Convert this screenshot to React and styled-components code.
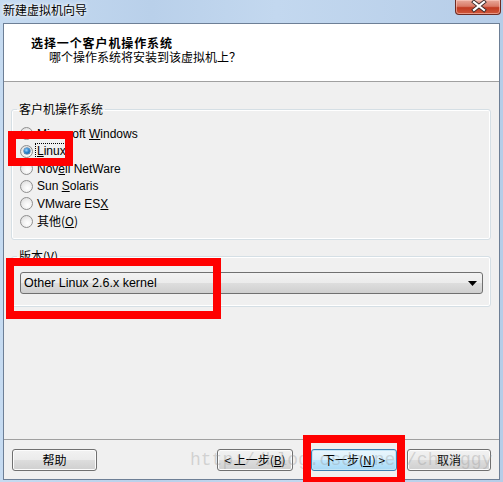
import styled, { createGlobalStyle } from "styled-components";

const GlobalStyle = createGlobalStyle`
  html, body {
    margin: 0;
    padding: 0;
  }
  body {
    width: 503px;
    height: 482px;
    overflow: hidden;
    background: #bcd3ec;
    font-family: "Liberation Sans", "Noto Sans CJK SC", sans-serif;
    font-size: 12px;
    color: #000;
  }
`;

const cjk = `"Noto Sans CJK SC", "Liberation Sans", sans-serif`;

const osList = [
  { label: "Microsoft ", key: "W", rest: "indows" },
  { label: "", key: "L", rest: "inux", checked: true },
  { label: "Nov", key: "e", rest: "ll NetWare" },
  { label: "Sun ", key: "S", rest: "olaris" },
  { label: "VMware ES", key: "X", rest: "" },
  { label: "其他(", key: "O", rest: ")" },
];

function App() {
  return (
    <>
      <GlobalStyle />
      <Window>
        <TitleBar>
          <Title>新建虚拟机向导</Title>
          <CloseButton>
            <svg width="46" height="15" viewBox="0 0 46 15">
              <path
                d="M18 3 L28 11 M28 3 L18 11"
                stroke="#3a2a2a"
                strokeWidth="4"
                strokeLinecap="square"
              />
              <path
                d="M18 3 L28 11 M28 3 L18 11"
                stroke="#fff"
                strokeWidth="2.2"
                strokeLinecap="square"
              />
            </svg>
          </CloseButton>
        </TitleBar>

        <Client>
          <Header>
            <HeaderTitle>选择一个客户机操作系统</HeaderTitle>
            <HeaderSub>哪个操作系统将安装到该虚拟机上？</HeaderSub>
          </Header>

          <Body>
            <Group $pb={9}>
              <Legend>客户机操作系统</Legend>
              {osList.map((os) => (
                <RadioRow key={os.key}>
                  <Radio $checked={os.checked} />
                  <RadioText $focus={os.checked} $cjk={os.label.includes("其")}>
                    {os.label}
                    <u>{os.key}</u>
                    {os.rest}
                  </RadioText>
                </RadioRow>
              ))}
            </Group>

            <Group $mt={9} $pb={12}>
              <Legend>
                版本(<u>V</u>)
              </Legend>
              <Combo>
                <span>Other Linux 2.6.x kernel</span>
                <svg width="9" height="5" viewBox="0 0 9 5">
                  <path d="M0 0 H9 L4.5 5 Z" fill="#000" />
                </svg>
              </Combo>
            </Group>
          </Body>

          <Footer>
            <Button $w={85}>帮助</Button>
            <Button $w={76} $auto>
              &lt; 上一步(<u>B</u>)
            </Button>
            <Button $w={86} $ml={18} $default>
              下一步(<u>N</u>) &gt;
            </Button>
            <Button $w={84} $ml={10}>
              取消
            </Button>
          </Footer>
        </Client>

        <Watermark>http://blog.csdn.net/chenggy</Watermark>
        <Mark style={{ left: 8, top: 131, width: 65, height: 35 }} />
        <Mark style={{ left: 6, top: 258, width: 215, height: 61 }} />
        <Mark style={{ left: 303, top: 435, width: 102, height: 50 }} />
      </Window>
    </>
  );
}

const Window = styled.div`
  position: relative;
  width: 503px;
  height: 482px;
  display: flex;
  flex-direction: column;
  background: linear-gradient(90deg, #c6dbf1 0%, #b9d0ea 30%, #c3d8ef 55%, #b6cde8 100%);
`;

const TitleBar = styled.div`
  height: 23px;
  flex: none;
  display: flex;
  justify-content: space-between;
  align-items: flex-start;
  padding-left: 3px;
`;

const Title = styled.div`
  padding-top: 3px;
  font-family: ${cjk};
  font-size: 12px;
  line-height: 14px;
  text-shadow: 0 0 5px #fff, 0 0 3px #fff;
`;

const CloseButton = styled.div`
  width: 46px;
  height: 15px;
  margin-right: 2px;
  box-sizing: border-box;
  border: 1px solid #6e2b22;
  border-top: none;
  border-radius: 0 0 4px 4px;
  background: linear-gradient(#e9a99b 0%, #d97a67 45%, #c13b22 55%, #d0583b 100%);
  box-shadow: inset 0 0 0 1px rgba(255, 210, 200, 0.55);
  svg {
    display: block;
    margin-top: -1px;
  }
`;

const Client = styled.div`
  flex: 1;
  margin: 0 3px 2px;
  border: 1px solid #6d7f96;
  background: #f0f0f0;
  display: flex;
  flex-direction: column;
`;

const Header = styled.div`
  height: 58px;
  box-sizing: border-box;
  flex: none;
  background: #fff;
  border-bottom: 1px solid #a0a0a0;
  padding: 12px 0 0 27px;
  font-family: ${cjk};
  font-size: 12px;
  line-height: 14px;
`;

const HeaderTitle = styled.div`
  font-weight: bold;
  letter-spacing: 0.9px;
`;

const HeaderSub = styled.div`
  padding-left: 18px;
`;

const Body = styled.div`
  flex: 1;
  padding: 20px 8px 0 7px;
`;

const Group = styled.fieldset`
  margin: ${(p) => p.$mt || 0}px 0 0;
  padding: 9px 7px ${(p) => p.$pb}px 8px;
  border: 1px solid #d5dfe5;
  border-radius: 3px;
  box-shadow: inset 0 0 0 1px #fff;
`;

const Legend = styled.legend`
  margin-left: -3px;
  padding: 0 2px;
  font-family: ${cjk};
  font-size: 12px;
  line-height: 14px;
`;

const RadioRow = styled.div`
  height: 17.5px;
  display: flex;
  align-items: center;
  gap: 2px;
`;

const Radio = styled.span`
  position: relative;
  width: 13px;
  height: 13px;
  box-sizing: border-box;
  border-radius: 50%;
  border: 1px solid #8f8f8f;
  background: radial-gradient(circle at 60% 65%, #ffffff 0%, #f2f2f2 40%, #d6d6d6 100%);
  flex: none;

  &::after {
    content: "";
    display: ${(p) => (p.$checked ? "block" : "none")};
    position: absolute;
    left: 2.5px;
    top: 2.5px;
    width: 6px;
    height: 6px;
    border-radius: 50%;
    background: radial-gradient(circle at 40% 35%, #9fd4ff 0%, #2b86cf 45%, #0c4f8c 100%);
    box-shadow: 0 0 0 0.5px #1b5a93;
  }
`;

const RadioText = styled.span`
  font-family: ${(p) => (p.$cjk ? cjk : `"Liberation Sans", sans-serif`)};
  font-size: 12px;
  line-height: 14px;
  padding: 0 1px;
  border: 1px dotted ${(p) => (p.$focus ? "#000" : "transparent")};
`;

const Combo = styled.div`
  height: 22px;
  box-sizing: border-box;
  border: 1px solid #707070;
  border-radius: 3px;
  background: linear-gradient(#f2f2f2 0%, #ebebeb 49%, #dddddd 51%, #cfcfcf 100%);
  display: flex;
  align-items: center;
  justify-content: space-between;
  padding: 0 5px 0 3px;
  font-size: 12.5px;
  svg {
    display: block;
  }
`;

const Footer = styled.div`
  height: 40px;
  box-sizing: border-box;
  flex: none;
  border-top: 1px solid #a0a0a0;
  padding: 9px 8px 0 8px;
  display: flex;
  align-items: flex-start;
`;

const Button = styled.div`
  width: ${(p) => p.$w}px;
  height: 22px;
  box-sizing: border-box;
  margin-left: ${(p) => (p.$auto ? "auto" : `${p.$ml || 0}px`)};
  border: 1px solid ${(p) => (p.$default ? "#3c7fb1" : "#707070")};
  border-radius: 3px;
  background: ${(p) =>
    p.$default
      ? "linear-gradient(#eaf6fd 0%, #d9f0fc 49%, #bee6fd 51%, #a7d9f5 100%)"
      : "linear-gradient(#f2f2f2 0%, #ebebeb 49%, #dddddd 51%, #cfcfcf 100%)"};
  box-shadow: inset 0 0 0 1px ${(p) => (p.$default ? "#c4e5f6" : "#fcfcfc")};
  display: flex;
  align-items: center;
  justify-content: center;
  font-family: ${cjk};
  font-size: 12px;
  line-height: 14px;
`;

const Watermark = styled.div`
  position: absolute;
  left: 190px;
  top: 450px;
  font-family: "Liberation Mono", monospace;
  font-size: 18px;
  line-height: 20px;
  color: rgba(150, 150, 150, 0.35);
  pointer-events: none;
  white-space: nowrap;
`;

const Mark = styled.div`
  position: absolute;
  box-sizing: border-box;
  border: 8px solid #ff0000;
  pointer-events: none;
`;

export default App;
